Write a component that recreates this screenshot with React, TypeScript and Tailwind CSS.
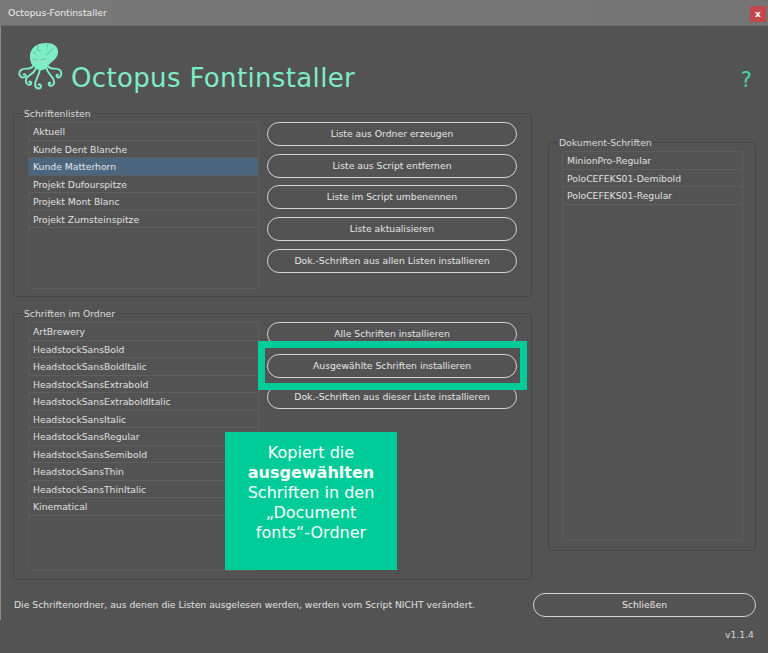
const F = "font-['DejaVu_Sans',sans-serif]";

function Octopus() {
  return (
    <svg viewBox="18 42 46 50" className="w-[46px] h-[50px] shrink-0">
      <g fill="none" stroke="#7eedc6" strokeWidth="1.9" strokeLinecap="round">
        <path d="M34 65C31 71 25 67 21 70C17 74 21 79 25 77C26.500 75.500 25 73.500 23.500 74.500" />
        <path d="M36 68C34 75 28 74 26 79C25 84 29 86 31 84C32 82 30 81 29 82" />
        <path d="M40 69C39 76 35 80 35 85C36 90 41 89 41 86C41 84 39 84 38.500 85" />
        <path d="M46 67C48 75 53 76 54 81C55 85 51 87 49 85C48 84 49 82 50.500 83" />
        <path d="M47 65C50 71 56 67 60 70C63 74 60 79 57 77C56 76 57 74 58 75" />
      </g>
      <path fill="#7eedc6" d="M31.500 64C28 56 30 46 41 43.500C51 41.500 59 45 58 53C57 60 50 62 47 67C45 71 39 71 37 69C35 67 33 66 31.500 64Z" />
      <path fill="none" stroke="#4fae92" strokeWidth="0.700" d="M46 55L53 49M38 45L37 50L41 51M48 44L47 47M33 52L36 54" />
      <circle cx="35" cy="61" r="1.400" fill="#c4d4cc" />
      <circle cx="43" cy="61" r="1.400" fill="#c4d4cc" />
      <path fill="none" stroke="#4a8f7b" strokeWidth="0.600" d="M33 59.300L37 60M41 60L45 59" />
    </svg>
  );
}

function ListBox({ items, selected, className }: { items: string[]; selected?: string; className: string }) {
  return (
    <div className={`border border-[#5c5c5c] rounded-[2px] ${className}`}>
      {items.map((t) => (
        <div
          key={t}
          className={`h-[17.5px] leading-[17px] pl-[4px] border-b border-[#5e5e5e] whitespace-nowrap ${
            t === selected ? "bg-[#4d6680] text-[#e6e6e6]" : "text-[#e0e0e0]"
          }`}
        >
          {t}
        </div>
      ))}
    </div>
  );
}

function Btn({ children, className = "" }: { children: string; className?: string }) {
  return (
    <button className={`h-[24px] border border-[#d4d4d4] rounded-full text-[#e6e6e6] text-center leading-[22px] whitespace-nowrap ${className}`}>
      {children}
    </button>
  );
}

function Panel({ title, className, children }: { title: string; className: string; children: React.ReactNode }) {
  return (
    <fieldset className={`border border-[#474747] rounded-[3px] pl-[14px] ${className}`}>
      <legend className="-ml-[5px] px-[1px] h-[14px] leading-[16px] text-[#dcdcdc]">{title}</legend>
      {children}
    </fieldset>
  );
}

export default function App() {
  return (
    <div className={`${F} relative w-[768px] h-[653px] overflow-hidden bg-[#535353] text-[9.25px]`}>
      <div className="h-[26px] bg-gradient-to-r from-[#787878] to-[#757575] border-b border-[#6a6a6a] flex items-center justify-between pl-[8px] pr-0 text-[#efefef]">
        <span>Octopus-Fontinstaller</span>
        <span className="w-[16px] h-[16px] mr-[2px] mt-[3px] bg-[#c4474d] text-white flex items-center justify-center text-[9px] font-bold leading-none">x</span>
      </div>
      <div className="border-l border-[#8a8a8a] h-[594px]">
        <div className="flex items-end h-[66px] pl-[17px] pr-[16px]">
          <Octopus />
          <div className="ml-[7px] text-[26px] leading-[30px] text-[#7eedc6] tracking-[0.35px] relative top-[1px]">Octopus Fontinstaller</div>
          <div className="ml-auto text-[#3fd9a6] text-[21px] leading-[26px] relative top-[1px]">?</div>
        </div>
        <div className="flex pl-[12px] pt-[14px]">
          <div className="w-[519px] flex flex-col gap-[9px]">
            <Panel title="Schriftenlisten" className="h-[191px]">
              <div className="flex pt-[2px]">
                <ListBox
                  className="w-[231px] h-[167px]"
                  selected="Kunde Matterhorn"
                  items={["Aktuell", "Kunde Dent Blanche", "Kunde Matterhorn", "Projekt Dufourspitze", "Projekt Mont Blanc", "Projekt Zumsteinspitze"]}
                />
                <div className="ml-[8px] w-[250px] flex flex-col gap-[7.7px]">
                  <Btn>Liste aus Ordner erzeugen</Btn>
                  <Btn>Liste aus Script entfernen</Btn>
                  <Btn>Liste im Script umbenennen</Btn>
                  <Btn>Liste aktualisieren</Btn>
                  <Btn>Dok.-Schriften aus allen Listen installieren</Btn>
                </div>
              </div>
            </Panel>
            <Panel title="Schriften im Ordner" className="h-[274px]">
              <div className="flex pt-[2px]">
                <ListBox
                  className="w-[231px] h-[249px]"
                  items={["ArtBrewery", "HeadstockSansBold", "HeadstockSansBoldItalic", "HeadstockSansExtrabold", "HeadstockSansExtraboldItalic", "HeadstockSansItalic", "HeadstockSansRegular", "HeadstockSansSemibold", "HeadstockSansThin", "HeadstockSansThinItalic", "Kinematical"]}
                />
                <div className="ml-[8px] w-[250px] flex flex-col gap-[7.7px]">
                  <Btn>Alle Schriften installieren</Btn>
                  <Btn>Ausgewählte Schriften installieren</Btn>
                  <Btn>Dok.-Schriften aus dieser Liste installieren</Btn>
                </div>
              </div>
            </Panel>
          </div>
          <div className="ml-[16px] w-[208px] pt-[29px]">
            <Panel title="Dokument-Schriften" className="h-[416px]">
              <div className="pt-[2px] -ml-[1px]">
                <ListBox className="w-[181px] h-[390px]" items={["MinionPro-Regular", "PoloCEFEKS01-Demibold", "PoloCEFEKS01-Regular"]} />
              </div>
            </Panel>
          </div>
        </div>
        <div className="flex items-center pl-[13px] mt-[13px]">
          <span className="w-[519px] text-[#e0e0e0] whitespace-nowrap">Die Schriftenordner, aus denen die Listen ausgelesen werden, werden vom Script NICHT verändert.</span>
          <Btn className="w-[223px]">Schließen</Btn>
        </div>
      </div>
      <div className="absolute right-[14px] bottom-[11px] text-[#d8d8d8]">v1.1.4</div>

      <div className="absolute left-[258px] top-[341px] w-[269px] h-[49px] border-[7px] border-[#00cc99]" />
      <div className="absolute left-[225px] top-[432px] w-[172px] h-[138px] bg-[#00cc99] text-white text-[16px] leading-[20px] text-center pt-[11px] px-[20px]">
        Kopiert die <b>ausgewählten</b> Schriften in den „Document fonts“-Ordner
      </div>
    </div>
  );
}
